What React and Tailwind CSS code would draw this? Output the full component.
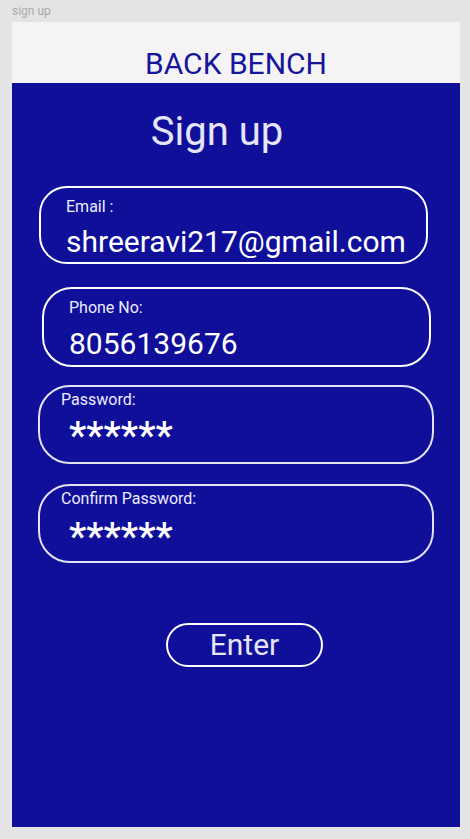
export default function App() {
  const font = { fontFamily: "Roboto, 'Liberation Sans', sans-serif" };
  return (
    <div className="w-[470px] h-[839px] bg-[#e4e4e4] overflow-hidden" style={font}>
      <div className="h-[22px] pl-[12px] pt-[3px] text-[12px] leading-[16px] text-[#a9a9a9]">sign up</div>
      <div className="ml-[12px] w-[448px] h-[805px] flex flex-col">
        <div className="h-[61px] bg-[#f5f3f4] flex items-end justify-center pb-[2px]">
          <span className="text-[30px] leading-[34px] text-[#16169a]">BACK BENCH</span>
        </div>
        <div className="flex-1 bg-[#100f9a] flex flex-col">
          <div className="h-[103px] flex justify-center pt-[26px]">
            <span className="text-[40px] leading-[46px] text-[#e6e4f7] mr-[38px]">Sign up</span>
          </div>
          <div className="ml-[27px] w-[389px] h-[78px] border-[2.5px] border-white rounded-[28px] pl-[25px] pt-[11px] text-white">
            <div className="text-[16px] leading-[16px] text-[#ececff]">Email :</div>
            <div className="text-[30px] leading-[34px] mt-[10px]">shreeravi217@gmail.com</div>
          </div>
          <div className="ml-[30px] mt-[23px] w-[389px] h-[80px] border-[2.5px] border-white rounded-[30px] pl-[25px] pt-[11px] text-white">
            <div className="text-[16px] leading-[16px] text-[#ececff]">Phone No:</div>
            <div className="text-[30px] leading-[34px] mt-[11px]">8056139676</div>
          </div>
          <div className="ml-[26px] mt-[18px] w-[396px] h-[79px] border-[2.5px] border-[#e3e2f3] rounded-[32px] pl-[21px] pt-[5px] text-white">
            <div className="text-[16px] leading-[16px] text-[#ececff]">Password:</div>
            <div className="text-[39px] leading-[40px] mt-[8px] pl-[8px] font-medium">******</div>
          </div>
          <div className="ml-[26px] mt-[20px] w-[396px] h-[79px] border-[2.5px] border-[#e3e2f3] rounded-[32px] pl-[21px] pt-[5px] text-white">
            <div className="text-[16px] leading-[16px] text-[#ececff]">Confirm Password:</div>
            <div className="text-[39px] leading-[40px] mt-[10px] pl-[8px] font-medium">******</div>
          </div>
          <div className="flex mt-[60px] ml-[154px]">
            <div className="w-[157px] h-[44px] border-[2.5px] border-white rounded-full flex items-center justify-center">
              <span className="text-[30px] leading-[34px] text-[#e6e4f7]">Enter</span>
            </div>
          </div>
        </div>
      </div>
    </div>
  );
}
